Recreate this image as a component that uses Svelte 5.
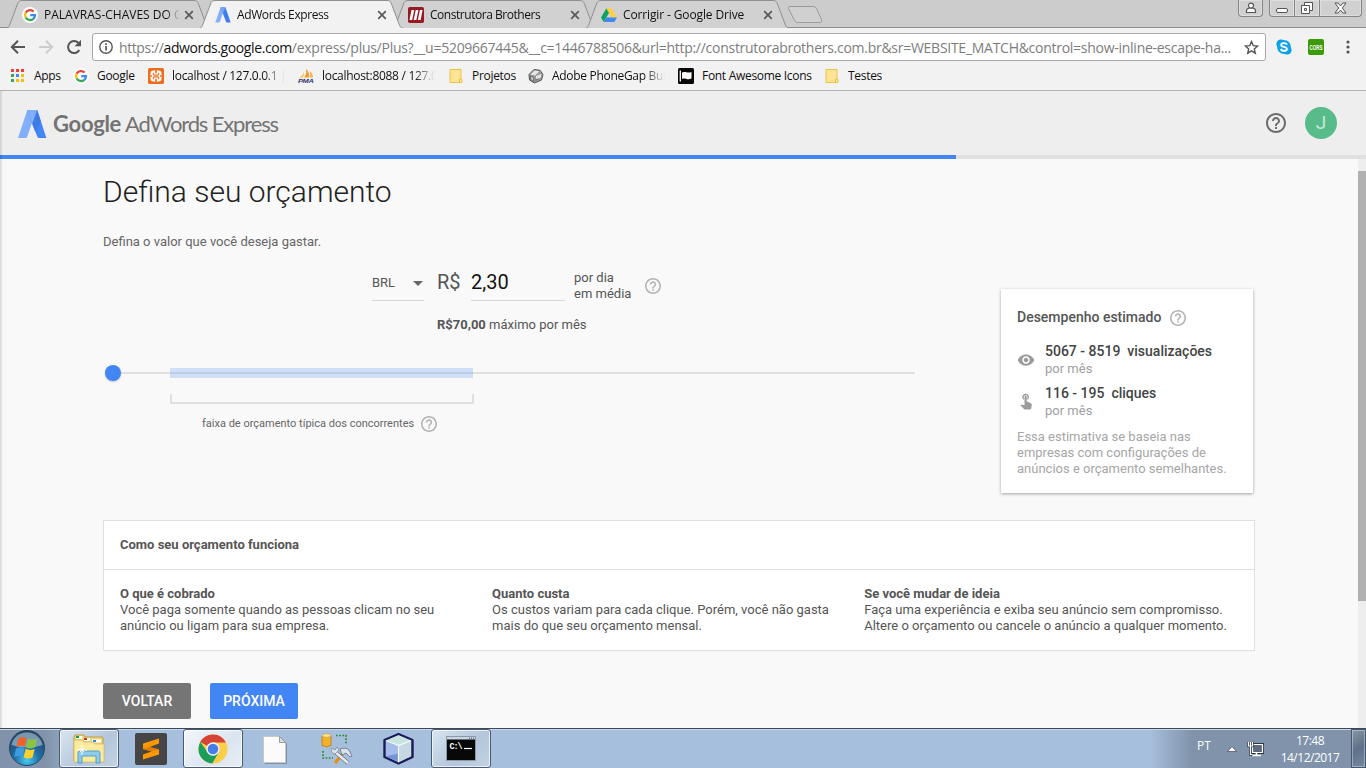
<script>
  const tabs = [
    { title: 'PALAVRAS-CHAVES DO G', icon: 'google', ls: 0 },
    { title: 'AdWords Express', icon: 'adwords', active: true, ls: -0.4 },
    { title: 'Construtora Brothers', icon: 'brothers', ls: -0.46 },
    { title: 'Corrigir - Google Drive', icon: 'drive', ls: -0.13 }
  ];
  const bookmarks = [
    { title: 'Apps', icon: 'apps', w: 63 },
    { title: 'Google', icon: 'google', w: 75 },
    { title: 'localhost / 127.0.0.1 |', icon: 'xampp', w: 150, fade: true },
    { title: 'localhost:8088 / 127.0.0', icon: 'pma', w: 150, fade: true },
    { title: 'Projetos', icon: 'folder', w: 80 },
    { title: 'Adobe PhoneGap Build', icon: 'phonegap', w: 150, fade: true },
    { title: 'Font Awesome Icons', icon: 'flag', w: 146 },
    { title: 'Testes', icon: 'folder', w: 90 }
  ];
  const columns = [
    { head: 'O que é cobrado', lines: ['Você paga somente quando as pessoas clicam no seu', 'anúncio ou ligam para sua empresa.'] },
    { head: 'Quanto custa', lines: ['Os custos variam para cada clique. Porém, você não gasta', 'mais do que seu orçamento mensal.'] },
    { head: 'Se você mudar de ideia', lines: ['Faça uma experiência e exiba seu anúncio sem compromisso.', 'Altere o orçamento ou cancele o anúncio a qualquer momento.'] }
  ];
  const tasks = [
    { icon: 'explorer', open: true },
    { icon: 'sublime' },
    { icon: 'chrome', open: true, front: true },
    { icon: 'file' },
    { icon: 'tools' },
    { icon: 'cube' },
    { icon: 'cmd', open: true }
  ];
  const appColors = ['#ea4335', '#ea4335', '#ea4335', '#34a853', '#4285f4', '#fbbc05', '#34a853', '#fbbc05', '#fbbc05'];
</script>

{#snippet help(size, color)}
  <svg class="help" width={size} height={size} viewBox="2 2 20 20" fill={color}>
    <path d="M11 18h2v-2h-2v2zm1-16C6.48 2 2 6.48 2 12s4.48 10 10 10 10-4.48 10-10S17.52 2 12 2zm0 18c-4.41 0-8-3.59-8-8s3.59-8 8-8 8 3.59 8 8-3.59 8-8 8zm0-14c-2.21 0-4 1.79-4 4h2c0-1.1.9-2 2-2s2 .9 2 2c0 2-3 1.75-3 5h2c0-2.25 3-2.5 3-5 0-2.21-1.79-4-4-4z" />
  </svg>
{/snippet}

{#snippet small(icon)}
  <svg class="fav" width="16" height="16" viewBox="0 0 16 16">
    {#if icon === 'google'}
      <circle cx="8" cy="8" r="8" fill="#fff" />
      <g fill="none" stroke-width="2.3">
        <path d="M11.6 4.5A5 5 0 0 0 3.7 5.6" stroke="#ea4335" />
        <path d="M3.7 5.6a5 5 0 0 0 0 4.9" stroke="#fbbc05" />
        <path d="M3.7 10.5a5 5 0 0 0 7.6 1.3" stroke="#34a853" />
        <path d="M11.3 11.8A5 5 0 0 0 13 8.2H8.2" stroke="#4285f4" />
      </g>
    {:else if icon === 'adwords'}
      <path d="M5.5 .5h4L5 14.6c-.3.7-.7.9-1.4.9H.3z" fill="#83aef9" />
      <path d="M5.5 .5h5l5.2 15h-3.6c-.7 0-1-.3-1.2-.9L7.8 6.2z" fill="#3f7de8" />
      <path d="M5.5 .5h5L7.8 7z" fill="#71a2f7" />
    {:else if icon === 'brothers'}
      <rect width="16" height="16" rx="1.8" fill="#981b24" />
      <path d="M3.500 3h2.700L4.200 13H1.500zM7.700 3h2.700L8.400 13H5.700zM11.900 3h2.700L12.600 13H9.900z" fill="#fff" />
    {:else if icon === 'drive'}
      <path d="M5.4 1.2 0 10.4l2.7 4.6L8.1 5.8z" fill="#0da45d" />
      <path d="M5.4 1.2h5.3l5.3 9.2h-5.3z" fill="#ffcf42" />
      <path d="M5.3 10.4H16L13.3 15H2.7z" fill="#4285f4" />
    {:else if icon === 'apps'}
      {#each appColors as c, i}
        <rect x={1 + (i % 3) * 5} y={1 + Math.floor(i / 3) * 5} width="3" height="3" fill={c} />
      {/each}
    {:else if icon === 'xampp'}
      <rect width="16" height="16" rx="1.500" fill="#ee6c1d" />
      <rect x="2.500" y="2.500" width="11" height="11" rx="3" fill="#fff" />
      <path d="M7 2.500h2L8.600 5.500H7.400zM7 13.500h2l-.4-3H7.400zM2.500 7.300h1.500v1.400H2.500zM12 7.300h1.500v1.400H12z" fill="#ee6c1d" />
      <path d="M5.300 4.800v1.500q0 .8 1.200.8h3q1.200 0 1.200-.8V4.800M5.300 11.200V9.700q0-.8 1.200-.8h3q1.200 0 1.200.8v1.500" fill="none" stroke="#ee6c1d" stroke-width="1.100" />
    {:else if icon === 'pma'}
      <path d="M8 .8C11 4 11.500 7 11 9.500H6C8.500 7 8.500 4 8 .8z" fill="#f89b1c" />
      <path d="M11.500 3c2.500 2 3.500 4 3.500 6.500h-3.200c.7-2 .6-4-.3-6.500z" fill="#f6b04c" />
      <path d="M5.500 3.500C5.500 6 4 8.500 1 9.800h4c1.200-2 1.200-4 .5-6.300z" fill="#fac277" />
      <text x="0" y="15" font-family="Liberation Sans" font-size="6" font-weight="700" font-style="italic" fill="#33386d" textLength="15.500" lengthAdjust="spacingAndGlyphs">PMA</text>
    {:else if icon === 'folder'}
      <path d="M2 1.500h11v9.500l1 .6v2.900H2z" fill="#fee493" stroke="#e9c24c" stroke-width="1" />
      <path d="M11.500 14.500v-3.500h2" fill="none" stroke="#e9c24c" />
    {:else if icon === 'phonegap'}
      <path d="M1 6.500 6 1.500l6 .8 3 4.200-1.500 5.500L6.500 15 1.500 12z" fill="#999" stroke="#555" />
      <path d="M2.500 6.500 6.500 2.500l5 .7L7 7.500zM8 8l5.500-2-.7 3.500L8 11.500z" fill="#e6e6e6" />
      <path d="M2.200 8l3.500 1.500v4L2.700 11.500zM7.500 12l3-1.200" fill="#c8c8c8" stroke="#444" stroke-width=".6" />
    {:else if icon === 'flag'}
      <rect width="16" height="16" rx="1.500" fill="#080808" />
      <path d="M2.300 2.500v11" stroke="#fff" stroke-width="1.300" />
      <path d="M4 4.500c3-1.800 5 1.200 9.500-.5v6.500c-4.500 2-6.500-1.200-9.500.4z" fill="#fff" />
    {/if}
  </svg>
{/snippet}

{#snippet taskIcon(icon)}
  <svg width="36" height="36" viewBox="0 0 36 36">
    {#if icon === 'explorer'}
      <path d="M3 6l1-2h9l1 2h18v24H3z" fill="#ecd57c" stroke="#bd9f43" />
      <path d="M5 5h6v3H5z" fill="#fff" /><path d="M5 5h3v2H5z" fill="#16a33a" />
      <path d="M13 7h6v3h-6z" fill="#fff" /><path d="M13 7h3v2h-3z" fill="#d33a24" />
      <path d="M21 8.500h9v3h-9z" fill="#fff" /><path d="M22 9h3v2h-3z" fill="#2a8fe0" />
      <path d="M3 9h8l2 2h9l2 2h9v18H3z" fill="#faeb9e" stroke="#d4b75c" stroke-width=".8" />
      <path d="M7 22q0-2 2-2h18q2 0 2 2v10h-4v-7H11v7H7z" fill="#8fcbea" stroke="#4798c5" stroke-width=".9" />
      <path d="M11 14v10M6 19h10M9 17l4 4M13 17l-4 4" stroke="#fff" stroke-width=".9" />
    {:else if icon === 'sublime'}
      <rect x="2" y="2" width="32" height="32" rx="2" fill="#454545" />
      <path d="M10 12.500 26 7.500v5L16.500 16l9.500 2.500v5L10 28.500v-5l8.500-3L10 18z" fill="#ff9800" />
      <path d="M10 18l8.500 2.500L26 18.500 16.500 16z" fill="#dc7e00" />
    {:else if icon === 'chrome'}
      <circle cx="18" cy="18" r="14.500" fill="#fbcf48" />
      <path d="M18 18 5.200 11A14.500 14.500 0 0 1 31 11.600H18z" fill="#d64435" />
      <path d="M18 18l-5.600 3L5.300 10.900A14.500 14.500 0 0 0 17.200 32.500L24 21z" fill="#1c9e5a" />
      <circle cx="18" cy="18" r="6.700" fill="#f4f4f4" /><circle cx="18" cy="18" r="5.300" fill="#467fe9" />
    {:else if icon === 'file'}
      <path d="M6.500 5.500h16l6 6v20h-22z" fill="#fbfbfb" stroke="#c8c8c8" />
      <path d="M22.500 5.500v6h6z" fill="#ddd" stroke="#888" stroke-width=".8" />
      <path d="M29.500 12v20.500H8" fill="none" stroke="#8091a8" />
    {:else if icon === 'tools'}
      <path d="M3 4.500v10q4.500 2.500 9 0v-10z" fill="#f2b32a" stroke="#bd7b10" stroke-width=".8" />
      <ellipse cx="7.500" cy="4.500" rx="4.500" ry="1.800" fill="#ffe69a" stroke="#c3902b" stroke-width=".6" />
      <path d="M17 4.500h10v9M4 20v7h10" fill="none" stroke="#2f852f" stroke-width="1.700" stroke-dasharray="1.700 1.500" />
      <path d="M25 21 16 32" stroke="#e88d15" stroke-width="3.300" />
      <path d="M15 20 29 32" stroke="#6c7b8b" stroke-width="4" /><path d="M15 20 29 32" stroke="#e5ebf0" stroke-width="2.400" />
      <path d="M21 18q6-2 9 1l3 6-2 1-4-4-4 2z" fill="#d9e2ea" stroke="#62707e" stroke-width=".8" />
      <path d="M13 17q-2 5 3 6l4-4-2-3-2 3z" fill="#dce3e9" stroke="#71808e" stroke-width=".7" />
    {:else if icon === 'cube'}
      <path d="M17.500 3 31.500 9v17L17.500 32.500 3.500 26V9z" fill="#a9bdd9" stroke="#1b1c58" stroke-width="2.400" stroke-linejoin="round" />
      <path d="M17.500 4.300 30 9.500 17.500 14.500 5 9.500z" fill="#c9e4df" />
      <path d="M5 9.500l12.500 5v16.700L5 25.200z" fill="#7795d6" /><path d="M5 9.500l12.500 5v8L5 25.200z" fill="#b7cdf2" opacity=".7" />
      <path d="M30 9.500l-12.500 5v16.700l12.500-6z" fill="#c6d8e2" />
      <path d="M17.500 14.500v16.700M5 9.500l12.500 5 12.500-5" fill="none" stroke="#f3faff" stroke-width="1.200" />
    {:else if icon === 'cmd'}
      <rect x="3.500" y="5.500" width="29" height="24" fill="#080808" stroke="#8d99a7" />
      <path d="M4 6h28v2.500H4z" fill="#c6d6e6" /><path d="M26 7.200h1m1 0h1m1 0h1" stroke="#33465d" />
      <text x="6.500" y="17.500" font-family="Liberation Mono" font-weight="700" font-size="8.500" fill="#fff" textLength="13">C:\</text>
      <path d="M21 17.500h8" stroke="#fff" stroke-width="1.200" />
    {/if}
  </svg>
{/snippet}

<div class="screen">
  <div class="tabstrip">
    {#each tabs as tab}
      <div class="tab" class:active={tab.active}>
        <svg class="shape" width="208" height="28" viewBox="0 0 208 28">
          <path d="M0 28.500C3 28 3 26 4 24L11.500 4C12.500 1.500 13.500 .5 16 .5H188C190.500 .5 191.500 1.500 192.500 4L200 24C201 26.500 201.500 28 205 28.500" fill={tab.active ? '#f2f2f2' : '#d1d1d1'} stroke="#8f8f8f" />
        </svg>
        {@render small(tab.icon)}
        <span class="tabtitle" style:letter-spacing="{tab.ls}px">{tab.title}</span>
        <svg class="close" width="10" height="10" viewBox="0 0 10 10"><path d="M1.200 1.200l7.600 7.600M8.800 1.200L1.200 8.800" stroke="#5a5a5a" stroke-width="1.700" /></svg>
      </div>
    {/each}
    <svg class="newtab" width="38" height="20" viewBox="0 0 38 20"><path d="M3.500 1.500h24q2 0 3 2l5 11q1 3-1 3h-23q-2 0-3-2l-6-12q-.5-2 1-2z" fill="#d0d0d0" stroke="#9b9b9b" /></svg>
    <div class="winbtns">
      <div class="wb user"><svg width="12" height="12" viewBox="0 0 12 12" fill="#fff" stroke="#555" stroke-width="1.200"><path d="M1.500 10.500V8.500q0-2 3-2.500h3q3 .5 3 2.500v2z" /><circle cx="6" cy="3.600" r="2.500" /></svg></div>
      <div class="wb minimize"><svg width="12" height="12" viewBox="0 0 12 12"><rect x=".5" y="6.500" width="11" height="4" rx="1.500" fill="#fff" stroke="#555" /></svg></div>
      <div class="wb restore"><svg width="14" height="14" viewBox="0 0 14 14" fill="#fff" stroke="#555"><path d="M4.500 1.500h8v8h-8z" /><path d="M1.500 4.500h8v8h-8z" /><path d="M4.500 7.500h2v2h-2z" /></svg></div>
      <div class="wb quit"><svg width="13" height="12" viewBox="0 0 13 12"><path d="M1 1h3l2.500 3L9 1h3L8.300 6l3.700 5H9L6.500 8 4 11H1l3.700-5z" fill="#fff" stroke="#555" /></svg></div>
    </div>
  </div>

  <div class="toolbar">
    <svg class="nav" width="16" height="16" viewBox="0 0 16 16" fill="none" stroke="#555" stroke-width="2"><path d="M15 8H2.500M8 1.800 1.800 8 8 14.200" /></svg>
    <svg class="nav" width="16" height="16" viewBox="0 0 16 16" fill="none" stroke="#ccc" stroke-width="2"><path d="M1 8h12.500M8 1.800 14.200 8 8 14.200" /></svg>
    <svg class="nav" width="16" height="16" viewBox="0 0 16 16"><path d="M13.300 11A6 6 0 1 1 12.500 4" fill="none" stroke="#555" stroke-width="2" /><path d="M15 .8v6.400H8.600z" fill="#555" /></svg>
    <div class="omnibox">
      <svg width="14" height="14" viewBox="0 0 14 14"><circle cx="7" cy="7" r="6.200" fill="none" stroke="#555" stroke-width="1.400" /><path d="M6.200 6h1.700v4.600H6.200zM6.200 3.300h1.700v1.600H6.200z" fill="#555" /></svg>
      <span class="url"><span class="host">https://<b>adwords.google.com</b></span>/express/plus/Plus?__u=5209667445&amp;__c=1446788506&amp;url=http://construtorabrothers.com.br&amp;sr=WEBSITE_MATCH&amp;control=show-inline-escape-ha...</span>
      <svg class="star" width="15" height="15" viewBox="0 0 15 15"><path d="M7.500 1.600l1.700 4 4.400.4-3.300 2.900 1 4.300-3.800-2.300-3.800 2.300 1-4.300L1.400 6l4.400-.4z" fill="none" stroke="#555" stroke-width="1.400" /></svg>
    </div>
    <svg class="skype" width="16" height="16" viewBox="0 0 16 16"><circle cx="5" cy="5" r="4.600" fill="#0a9de5" /><circle cx="11" cy="11" r="4.600" fill="#0a9de5" /><circle cx="8" cy="8" r="6.900" fill="#0ca4eb" /><path d="M11 5.700C10 3.600 5.200 3.600 5.200 5.900c0 2.500 5.700 1.400 5.700 4.100 0 2.500-5.200 2.500-6-.1" fill="none" stroke="#fff" stroke-width="1.900" /></svg>
    <svg class="cors" width="16" height="16" viewBox="0 0 16 16"><rect width="16" height="16" rx="2" fill="#3c9b0a" /><text x="1.500" y="10.500" font-family="Liberation Sans" font-weight="700" font-size="7.500" fill="#fff" textLength="13" lengthAdjust="spacingAndGlyphs">CORS</text></svg>
    <svg class="dots" width="4" height="14" viewBox="0 0 4 14" fill="#555"><circle cx="2" cy="2" r="1.600" /><circle cx="2" cy="7" r="1.600" /><circle cx="2" cy="12" r="1.600" /></svg>
  </div>

  <div class="bookmarks">
    {#each bookmarks as b}
      <div class="bm" style:width="{b.w}px">
        {@render small(b.icon)}<span class:fade={b.fade}>{b.title}</span>
      </div>
    {/each}
  </div>

  <div class="page">
    <header>
      <svg width="29" height="28" viewBox="0 0 29 28"><path d="M9.300 0h9L9.300 26.500Q8.800 28 7 28H0z" fill="#82aff9" /><path d="M9.300 0h10L28.300 28h-7q-1.500 0-2-1.500L14.200 14z" fill="#4285f4" /><path d="M19.200 0 14.200 14l3.200 8 5.400-11z" fill="#3b78e0" opacity=".75" /><path d="M9.300 0h9.800L14.200 14z" fill="#82aff9" /></svg>
      <div class="brand"><span class="g">Google</span><span class="aw">AdWords Express</span></div>
      <div class="spacer"></div>
      {@render help(20, '#6c6c6c')}
      <div class="avatar">J</div>
    </header>
    <div class="progress"><div></div></div>
    <div class="body">
      <main>
        <div class="upper">
          <section class="budget">
            <h1>Defina seu orçamento</h1>
            <p class="lead">Defina o valor que você deseja gastar.</p>
            <div class="amount">
              <div class="currency">BRL<i></i></div>
              <div class="sym">R$</div>
              <div class="input">2,30</div>
              <div class="per">por dia<br />em média</div>
              {@render help(16, '#b3b3b3')}
            </div>
            <p class="monthly"><b>R$70,00</b> máximo por mês</p>
            <div class="slider"><div class="knob"></div><div class="range"></div></div>
            <div class="bracket"></div>
            <div class="caption"><span>faixa de orçamento típica dos concorrentes</span>{@render help(16, '#b3b3b3')}</div>
          </section>
          <aside>
            <h2><span>Desempenho estimado</span>{@render help(16, '#b3b3b3')}</h2>
            <div class="stat">
              <svg width="18" height="18" viewBox="0 0 24 24" fill="#9b9b9b"><path d="M12 4.500C7 4.500 2.730 7.610 1 12c1.730 4.390 6 7.500 11 7.500s9.270-3.110 11-7.500c-1.730-4.390-6-7.500-11-7.500zM12 17c-2.760 0-5-2.240-5-5s2.240-5 5-5 5 2.240 5 5-2.240 5-5 5zm0-8c-1.660 0-3 1.340-3 3s1.340 3 3 3 3-1.340 3-3-1.340-3-3-3z" /></svg>
              <div><strong>5067 - 8519&nbsp; visualizações</strong><span>por mês</span></div>
            </div>
            <div class="stat">
              <svg width="18" height="18" viewBox="0 0 24 24" fill="#9b9b9b"><path d="M9 11.240V7.500C9 6.120 10.120 5 11.500 5S14 6.120 14 7.500v3.740c1.210-.81 2-2.180 2-3.740C16 5.010 13.990 3 11.500 3S7 5.010 7 7.500c0 1.560.79 2.930 2 3.740zm9.840 4.630l-4.540-2.260c-.17-.07-.35-.11-.54-.11H13v-6c0-.83-.67-1.500-1.500-1.500S10 6.670 10 7.500v10.740l-3.430-.72c-.08-.01-.15-.03-.24-.03-.31 0-.59.13-.79.33l-.79.800 4.940 4.940c.27.27.65.44 1.060.44h6.790c.75 0 1.330-.55 1.440-1.280l.75-5.270c.01-.07.02-.14.02-.2 0-.62-.38-1.160-.91-1.380z" transform="translate(0 -2)" /></svg>
              <div><strong>116 - 195&nbsp; cliques</strong><span>por mês</span></div>
            </div>
            <p>Essa estimativa se baseia nas<br />empresas com configurações de<br />anúncios e orçamento semelhantes.</p>
          </aside>
        </div>
        <section class="how">
          <div class="howhead">Como seu orçamento funciona</div>
          <div class="cols">
            {#each columns as c}
              <div><b>{c.head}</b>{#each c.lines as l}<span>{l}</span>{/each}</div>
            {/each}
          </div>
        </section>
        <div class="buttons"><div class="btn grey">VOLTAR</div><div class="btn blue">PRÓXIMA</div></div>
      </main>
      <div class="scroll"><div></div></div>
    </div>
  </div>

  <div class="taskbar">
    <svg class="orb" width="38" height="38" viewBox="0 0 38 38">
      <defs><radialGradient id="orb" cx=".5" cy=".85" r=".8"><stop offset="0" stop-color="#4cc8f2" /><stop offset=".45" stop-color="#1f6fa6" /><stop offset="1" stop-color="#23425f" /></radialGradient></defs>
      <circle cx="19" cy="19" r="17.500" fill="url(#orb)" stroke="#244866" />
      <path d="M3.500 16a15.800 15.800 0 0 1 31 0q-15 5-31 0z" fill="#cfe2ee" opacity=".5" />
      <path d="M10.500 9.500q4-2.500 8.300-.2l-1.900 8.500q-4.200-2-8.600.2z" fill="#f0622a" />
      <path d="M20 9.800q4.300 2.200 9.200-.3l-2.200 8.800q-4.300 2.200-8.900-.1z" fill="#8cc43f" />
      <path d="M8 19.500q4.200-2.200 8.600-.1l-2.100 8.500q-4.200-2-8.400.2z" fill="#3d9be0" />
      <path d="M17.700 19.800q4.300 2.200 9 .1l-2.200 8.500q-4.200 2.200-8.900-.1z" fill="#fcd02e" />
    </svg>
    {#each tasks as t}
      <div class="task" class:open={t.open} class:front={t.front}>{@render taskIcon(t.icon)}</div>
    {/each}
    <div class="tray">
      <span class="lang">PT</span>
      <svg class="up" width="10" height="7" viewBox="0 0 10 7"><path d="M5 .6 9.500 5.500H.5z" fill="#fff" stroke="#3f4b5b" stroke-width=".7" /></svg>
      <svg class="net" width="17" height="17" viewBox="0 0 17 17"><path d="M5.500 3.500h10v8h-10z" fill="#5c6a7b" stroke="#2c3644" stroke-width="3" /><path d="M5.500 3.500h10v8h-10z" fill="#5c6a7b" stroke="#fff" stroke-width="1.200" /><path d="M5 14.500h9M9.500 12v2" stroke="#fff" stroke-width="1.600" /><path d="M1.500 1v4h4V1M3.500 1v12.500h2" fill="none" stroke="#2c3644" stroke-width="2.500" /><path d="M1.500 1v4h4V1M3.500 1v12.500h2" fill="none" stroke="#fff" stroke-width="1.200" /></svg>
      <div class="clock"><span>17:48</span><span>14/12/2017</span></div>
      <div class="desk"></div>
    </div>
  </div>
</div>

<style>
  :global(body) { margin: 0; overflow: hidden; }
  .screen { width: 1366px; height: 768px; display: flex; flex-direction: column; overflow: hidden; font-family: 'Open Sans', 'Noto Sans', sans-serif; font-size: 12px; color: #111; }
  .screen *, .screen { box-sizing: border-box; }
  svg { flex: none; display: block; }
  p, h1, h2 { margin: 0; }

  .tabstrip { height: 28px; flex: none; background: #ccc; display: flex; padding-left: 6px; border-bottom: 1px solid #8f8f8f; }
  .tab { position: relative; width: 193px; height: 28px; display: flex; align-items: center; padding: 1px 0 0 16px; }
  .tab.active { z-index: 1; }
  .shape { position: absolute; left: 0; top: 0; z-index: 0; }
  .tab :global(.fav), .tabtitle, .close { position: relative; }
  .tabtitle { width: 136px; margin-left: 6px; white-space: nowrap; overflow: hidden; -webkit-mask-image: linear-gradient(90deg, #000 122px, transparent 136px); mask-image: linear-gradient(90deg, #000 122px, transparent 136px); }
  .close { margin-left: 4px; }
  .newtab { margin: 5px 0 0 8px; }
  .winbtns { display: flex; margin: 0 4px 0 auto; }
  .wb { height: 17px; display: flex; align-items: center; justify-content: center; border: 1px solid #858585; border-top: 0; background: #d0d0d0; box-shadow: inset 0 0 0 1px #dedede; }
  .user { width: 25px; margin-right: 6px; border-radius: 0 0 4px 4px; }
  .minimize { width: 26px; border-radius: 0 0 0 4px; }
  .restore { width: 25px; border-left: 0; }
  .quit { width: 42px; border-left: 0; border-radius: 0 0 4px 0; }

  .toolbar { height: 34px; flex: none; background: #f2f2f2; display: flex; align-items: center; padding: 4px 16px 0 10px; }
  .nav { margin-right: 12px; }
  .nav:nth-child(3) { margin-right: 10px; }
  .omnibox { width: 1174px; height: 28px; border: 1px solid #a8a8a8; border-radius: 3px; background: #fff; display: flex; align-items: center; padding: 0 6px; }
  .url { width: 1120px; margin-left: 6px; white-space: nowrap; font-size: 14px; color: #7d7d7d; letter-spacing: -0.27px; }
  .host { letter-spacing: -0.4px; }
  .url b { font-weight: 400; color: #111; }
  .star { margin-left: auto; }
  .skype { margin-left: 10px; }
  .cors { margin-left: 16px; }
  .dots { margin-left: 22px; }

  .bookmarks { height: 29px; flex: none; background: #f2f2f2; border-bottom: 1px solid #b2b2b2; display: flex; align-items: center; padding-left: 10px; }
  .bm { display: flex; align-items: center; flex: none; white-space: nowrap; letter-spacing: -0.3px; line-height: 16px; }
  .bm span { margin-left: 8px; overflow: hidden; }
  .bm span.fade { width: 113px; -webkit-mask-image: linear-gradient(90deg, #000 92px, transparent 113px); mask-image: linear-gradient(90deg, #000 92px, transparent 113px); }

  .page { height: 637px; flex: none; display: flex; flex-direction: column; background: #f9f9f9; font-family: Roboto, sans-serif; position: relative; overflow: hidden; }
  .page::before { content: ''; position: absolute; z-index: 2; left: 0; top: 0; width: 3px; height: 100%; background: linear-gradient(90deg, rgba(0,0,0,.14), transparent); }
  header { height: 64px; flex: none; background: #eee; display: flex; align-items: center; padding: 0 29px 0 18px; }
  header > svg:first-child { margin-top: 1px; }
  .brand { display: flex; margin: 1px 0 0 6px; color: #737373; font: 22px/28px Lato, sans-serif; white-space: nowrap; letter-spacing: -1.15px; }
  .g { width: 72px; font-weight: 700; letter-spacing: -0.3px; }
  .spacer { flex: 1; }
  .avatar { width: 32px; height: 32px; margin-left: 19px; border-radius: 50%; background: #57bb8a; color: #c6e8d7; font-size: 19px; line-height: 32px; text-align: center; }
  .progress { height: 4px; flex: none; background: #e0e0e0; }
  .progress div { width: 956px; height: 4px; background: #4285f4; }
  .body { flex: 1; display: flex; min-height: 0; }
  main { width: 1358px; padding-left: 103px; font-size: 13px; line-height: 16px; color: #555; }
  .scroll { width: 8px; background: #eee; padding-top: 12px; }
  .scroll div { height: 430px; background: #b1b1b1; }
  .upper { display: flex; height: 361px; }
  .budget { width: 898px; padding-top: 13px; }
  h1 { font-weight: 300; font-size: 30px; line-height: 40px; color: #212121; }
  .lead { margin-top: 22px; color: #666; }
  .amount { display: flex; margin: 20px 0 0 269px; height: 31px; }
  .currency { width: 52px; border-bottom: 1px solid #d6d6d6; display: flex; align-items: center; justify-content: space-between; padding-bottom: 4px; }
  .currency i { border: 5px solid transparent; border-top-color: #666; border-bottom: 0; margin-right: 1px; }
  .sym { width: 34px; margin-left: 13px; font-size: 20px; line-height: 25px; }
  .input { width: 94px; border-bottom: 1px solid #d6d6d6; font-size: 20px; line-height: 25px; color: #111; }
  .per { width: 71px; margin-left: 9px; line-height: 16px; }
  .amount :global(.help) { margin-top: 8px; }
  .monthly { margin: 16px 0 0 334px; }
  b { font-weight: 700; }
  .slider { position: relative; width: 802px; height: 2px; margin: 39px 0 0 10px; background: #e0e0e0; }
  .knob { position: absolute; left: -8px; top: -7px; width: 16px; height: 16px; border-radius: 50%; background: #4285f4; box-shadow: 0 1px 2px rgba(0,0,0,.2); }
  .range { position: absolute; left: 57px; top: -4px; width: 303px; height: 10px; background: rgba(66,133,244,.22); }
  .bracket { width: 304px; height: 10px; margin: 20px 0 0 67px; border: 2px solid #e0e0e0; border-top: 0; }
  .caption { display: flex; align-items: center; margin: 12px 0 0 99px; font-size: 11px; color: #666; }
  .caption span { width: 219px; white-space: nowrap; }
  aside { width: 252px; height: 204px; margin-top: 130px; padding: 20px 0 0 16px; background: #fff; box-shadow: 0 1px 3px rgba(0,0,0,.35); }
  h2 { display: flex; align-items: center; gap: 9px; font-size: 14px; font-weight: 500; line-height: 16px; height: 17px; }
  h2 span { margin-bottom: 2px; }
  .stat { display: flex; height: 42px; }
  h2 + .stat { margin-top: 17px; }
  .stat svg { margin: 8px 10px 0 0; }
  .stat div { display: flex; flex-direction: column; }
  .stat strong { font-size: 14px; font-weight: 500; line-height: 16px; margin-bottom: 2px; color: #444; }
  .stat span { color: #a0a0a0; line-height: 16px; }
  aside p { margin-top: 1px; padding-top: 1px; color: #a6a6a6; }
  .how { width: 1152px; height: 131px; background: #fff; border: 1px solid #e0e0e0; }
  .howhead { height: 49px; padding: 16px; border-bottom: 1px solid #e0e0e0; font-weight: 700; }
  .cols { display: flex; padding: 16px 0 0 16px; }
  .cols div { width: 372.1px; display: flex; flex-direction: column; white-space: nowrap; }
  .buttons { display: flex; gap: 19px; margin-top: 32px; }
  .btn { width: 88px; height: 36px; border-radius: 2px; color: #fff; font-size: 14px; font-weight: 500; line-height: 36px; text-align: center; }
  .grey { background: #757575; }
  .blue { background: #4285f4; }

  .taskbar { height: 40px; flex: none; display: flex; border-top: 1px solid #3c4858; box-shadow: inset 0 1px 0 #c9d9ea; background: linear-gradient(90deg, #8093aa 0, #8093aa 45px, #a6bfdc 90px, #a6bfdc 1150px, #8093aa 1192px); }
  .orb { margin: 0 13px 0 8px; }
  .task { width: 60px; height: 39px; margin-right: 2px; display: flex; align-items: center; justify-content: center; border: 1px solid transparent; border-radius: 3px; }
  .task.open { border-color: #4b5c72; box-shadow: inset 0 0 0 1px rgba(255,255,255,.7); background: linear-gradient(135deg, #d9e4ef, #b3c6dc 60%, #c4d3e4); }
  .task.front { background: linear-gradient(135deg, #f3f6fa, #dbe5f0 60%, #e8eef5); }
  .tray { margin-left: auto; display: flex; color: #fff; letter-spacing: -0.5px; }
  .lang { width: 30px; font-size: 12px; line-height: 34px; letter-spacing: 0; }
  .up { margin-top: 17px; width: 10px; }
  .net { margin: 12px 16px 0 10px; }
  .clock { width: 60px; display: flex; flex-direction: column; align-items: center; padding-top: 3px; font-size: 12px; line-height: 17px; white-space: nowrap; }
  .desk { width: 15px; margin-left: 11px; border: 1px solid #45566b; box-shadow: inset 0 0 0 1px rgba(255,255,255,.35); background: linear-gradient(150deg, #8796a8, #5e7188 50%, #7488a0); }
</style>
